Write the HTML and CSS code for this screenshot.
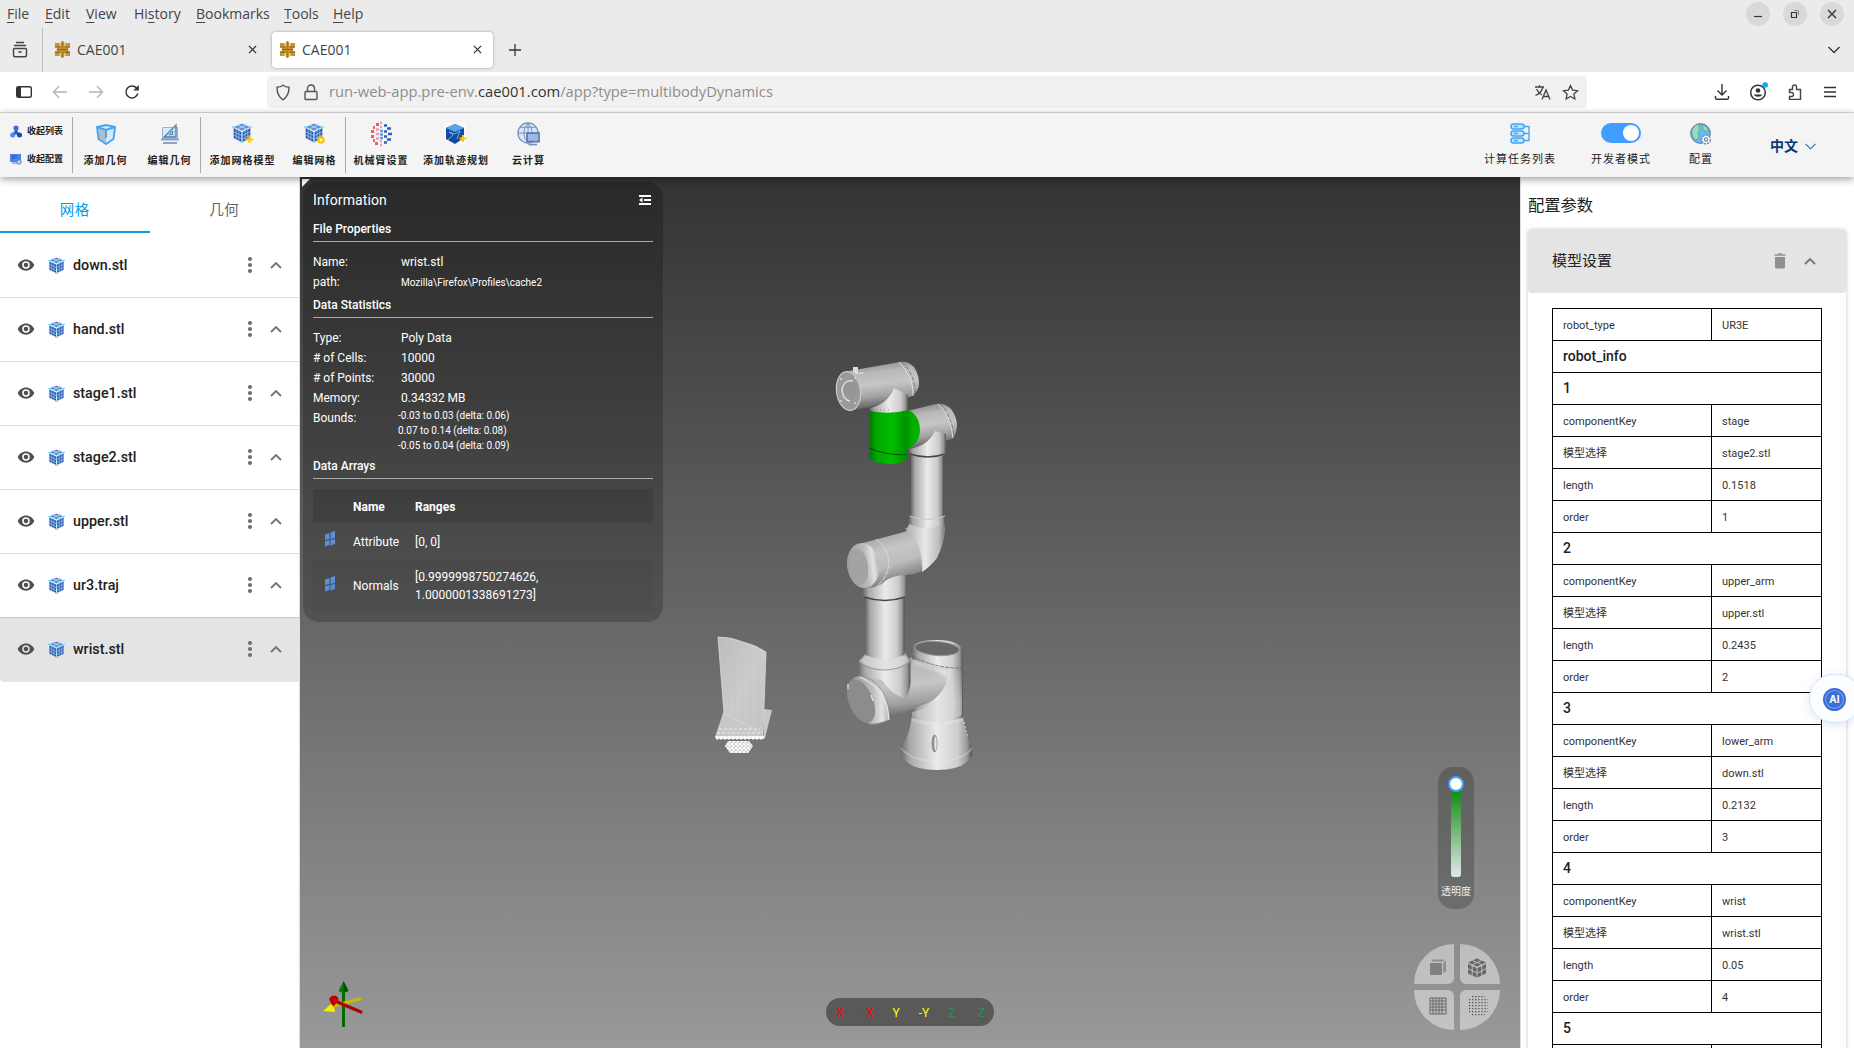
FILE: index.html
```html
<!DOCTYPE html>
<html lang="zh-CN">
<head>
<meta charset="utf-8">
<title>CAE001</title>
<link rel="stylesheet" href="styles.css">
</head>
<body>
<svg class="defs" width="0" height="0">
  <defs>
    <symbol id="cube" viewBox="0 0 18 18">
      <path d="M9 .5 16.500 3.500 9 7 1.500 3.500Z" fill="#5f93da"/>
      <path d="M1.500 4.500 8.500 8v9L1.500 13.500ZM16.500 4.500 9.500 8v9l7-3.500Z" fill="#2a5cae"/>
      <path d="M5.200 1.800 13 5.500M12.800 1.800 5 5.500" stroke="#b4d0f6" stroke-width=".9"/>
      <path d="M3.800 5.500v9M6.200 6.700v9M11.800 6.700v9M14.200 5.500v9M1.500 7.900 9 11.500l7.500-3.600M1.500 10.900 9 14.500l7.500-3.600" stroke="#a5c5f2" stroke-width=".7" fill="none"/>
      <path d="M0 3.700h3.500M14.500 3.700H18M9 8v4M7.500 17h3" stroke="#6cd0fb" stroke-width="1.300"/>
    </symbol>
    <symbol id="gear-logo" viewBox="0 0 16 18">
      <path d="M0 2h5v3h1V1.500L8 0l2 1.500V5h1V2h5v5h-2v4h2v5h-5v-3h-1v3.500L8 18l-2-1.500V13H5v3H0v-5h2V7H0Z" fill="#c9962e"/>
      <path d="M0 6.300h5.500M10.500 6.300H16M2 9h12M0 11.800h5.500M10.500 11.800H16" stroke="#8a631b" stroke-width="1.200"/>
      <path d="M8 0v18" stroke="#a87a22" stroke-width="1.400"/>
    </symbol>
    <symbol id="x" viewBox="0 0 10 10"><path d="M1 1l8 8M9 1L1 9" stroke="#333" stroke-width="1.400"/></symbol>
    <symbol id="eye" viewBox="0 0 24 24"><path fill="#505050" d="M12 9a3 3 0 0 0-3 3 3 3 0 0 0 3 3 3 3 0 0 0 3-3 3 3 0 0 0-3-3m0 8a5 5 0 0 1-5-5 5 5 0 0 1 5-5 5 5 0 0 1 5 5 5 5 0 0 1-5 5m0-12.500C7 4.500 2.730 7.610 1 12c1.730 4.390 6 7.500 11 7.500s9.270-3.110 11-7.500c-1.730-4.390-6-7.500-11-7.500Z"/></symbol>
    <symbol id="dots" viewBox="0 0 6 18"><g fill="#6f6f6f"><circle cx="3" cy="3" r="2.100"/><circle cx="3" cy="9" r="2.100"/><circle cx="3" cy="15" r="2.100"/></g></symbol>
    <symbol id="up" viewBox="0 0 12 8"><path d="M1 7l5-5 5 5" fill="none" stroke="#757575" stroke-width="1.900"/></symbol>
    <symbol id="array" viewBox="0 0 10 16"><path d="M0 3.500 4.500 2v6L0 9ZM5.500 1.500 10 0v7l-4.500 1ZM0 10.200 4.500 9v5L0 15.500ZM5.500 9 10 8v5l-4.500 1.500Z" fill="#5b8fdc"/></symbol>
  </defs>
</svg>

<header class="browser">
  <div class="menubar">
    <nav class="menus">
      <span class="m-file"><u>F</u>ile</span><span class="m-edit"><u>E</u>dit</span><span class="m-view"><u>V</u>iew</span><span class="m-hist">Hi<u>s</u>tory</span><span class="m-book"><u>B</u>ookmarks</span><span class="m-tool"><u>T</u>ools</span><span><u>H</u>elp</span>
    </nav>
    <div class="winbtns">
      <i><svg width="10" height="10"><path d="M1 7.500h8" stroke="#333" stroke-width="1.200"/></svg></i>
      <i><svg width="10" height="10"><path d="M1.500 3.500h5v5h-5Z" fill="none" stroke="#333" stroke-width="1.200"/><path d="M4 1.500h4.500V6" fill="none" stroke="#888"/></svg></i>
      <i><svg width="10" height="10"><use href="#x"/></svg></i>
    </div>
  </div>
  <div class="tabs">
    <div class="recent"><svg width="18" height="18"><path d="M5 1.500h8M3 4.500h12M3.500 7.500h11q1 0 1 1v5.500q0 1.800-1.800 1.800H4.300q-1.800 0-1.800-1.800V8.500q0-1 1-1ZM7.300 11h3.400" fill="none" stroke="#444" stroke-width="1.400"/></svg></div>
    <div class="tab"><svg width="17" height="17"><use href="#gear-logo"/></svg><span>CAE001</span><svg class="close" width="9" height="9"><use href="#x"/></svg></div>
    <div class="tab active"><svg width="17" height="17"><use href="#gear-logo"/></svg><span>CAE001</span><svg class="close" width="9" height="9"><use href="#x"/></svg></div>
    <svg class="plus" width="12" height="12"><path d="M6 0v12M0 6h12" stroke="#333" stroke-width="1.300"/></svg>
    <svg class="alltabs" width="12" height="8"><path d="M.5 1 6 6.500 11.500 1" fill="none" stroke="#333" stroke-width="1.300"/></svg>
  </div>
  <div class="navbar">
    <div class="navbtns">
      <svg width="16" height="14"><rect x=".7" y="1.700" width="14.600" height="10.600" rx="1.500" fill="none" stroke="#333" stroke-width="1.400"/><path d="M1 2h4v10H1Z" fill="#333"/></svg>
      <svg width="16" height="14"><path d="M15 7H1.500M7 1 1.500 7 7 13" fill="none" stroke="#b5b5b5" stroke-width="1.400"/></svg>
      <svg width="16" height="14"><path d="M1 7h13.500M9 1l5.500 6L9 13" fill="none" stroke="#b5b5b5" stroke-width="1.400"/></svg>
      <svg width="16" height="16"><path d="M13.800 9.500A6 6 0 1 1 12.500 4" fill="none" stroke="#333" stroke-width="1.500"/><path d="M14.800 1v5.500H9.300Z" fill="#333"/></svg>
    </div>
    <div class="urlbar">
      <svg class="shield" width="16" height="17"><path d="M8 1.200c2 1.500 4 2 6 2.100 0 5-1 9.500-6 12.500C3 12.800 2 8.300 2 3.300c2-.1 4-.6 6-2.100Z" fill="none" stroke="#555" stroke-width="1.400"/></svg>
      <svg class="lock" width="14" height="17"><path d="M2 7.500h10q1 0 1 1v6q0 1-1 1H2q-1 0-1-1v-6q0-1 1-1ZM3.500 7.500V4.200a3.500 3.200 0 0 1 7 0v3.300" fill="none" stroke="#555" stroke-width="1.400"/></svg>
      <span class="url">run-web-app.pre-env.<b>cae001.com</b>/app?type=multibodyDynamics</span>
      <svg class="translate" width="17" height="17"><path d="M1 3h9M5.500 1v2M9 3C8 7 5 10 1.500 11.500M2.500 5C4 8 6 10 8 11M8 15.500 12 6l4 9.500M9.500 12.500h5" fill="none" stroke="#444" stroke-width="1.300"/></svg>
      <svg width="17" height="17"><path d="m8.500 1.500 2.100 4.600 5 .6-3.700 3.400 1 4.900-4.400-2.500L4.100 15l1-4.900L1.400 6.700l5-.6Z" fill="none" stroke="#444" stroke-width="1.300"/></svg>
    </div>
    <div class="navright">
      <svg width="16" height="16"><path d="M8 0v10.500M3.500 6.500 8 11l4.500-4.500M1.500 12v2q0 1.300 1.300 1.300h10.400q1.300 0 1.300-1.300v-2" fill="none" stroke="#333" stroke-width="1.400"/></svg>
      <svg class="account" width="20" height="20"><circle cx="10" cy="10.500" r="7.300" fill="none" stroke="#333" stroke-width="1.500"/><circle cx="10" cy="8.500" r="2.300" fill="#333"/><path d="M5.500 12.500h9a5 4 0 0 1-9 0Z" fill="#333"/><circle cx="17.200" cy="3" r="2.800" fill="#00aeff"/></svg>
      <svg width="16" height="16"><path d="M2.500 5.500h3V3a2 2 0 0 1 4 0v2.500h4v10h-11v-3h2a2 2 0 0 0 0-4h-2Z" fill="none" stroke="#444" stroke-width="1.400"/></svg>
      <svg width="14" height="12"><path d="M1 1.500h12M1 6h12M1 10.500h12" stroke="#333" stroke-width="1.300"/></svg>
    </div>
  </div>
</header>

<section class="toolbar">
  <div class="collapse">
    <div><svg width="12" height="13"><path d="M6 4v4M6 7 3 10M6 7l3 3" stroke="#2c57c7" stroke-width="3"/><circle cx="6" cy="3" r="2.600" fill="#3c6be0"/><circle cx="2.700" cy="10" r="2.500" fill="#5a85ea"/><circle cx="9.500" cy="10" r="2.500" fill="#1e46b5"/></svg>收起列表</div>
    <div><svg width="12" height="12"><path d="M0 1h11v8H0Z" fill="#4a86e8"/><path d="M2 3h5M2 5h3" stroke="#1d4fae"/><path d="M2 10h5" stroke="#8aa6d6" stroke-width="1.500"/><circle cx="9" cy="9" r="2.200" fill="#c7d6f2" stroke="#5877b5"/></svg>收起配置</div>
  </div>
  <div class="tools t1">
    <div class="tool"><svg width="20" height="20" viewBox="0 0 20 22"><path d="M10 2 19 4l-1.500 12-7.500 5-7.500-5L1 4Z" fill="#d6eafc"/><path d="m2 5 8 2.500V20l-7-4.500Z" fill="#b5bcc4"/><path d="M10 2 19 4l-1.500 12-7.500 5-7.500-5L1 4ZM1 4l9 3 9-3M10 7v8" fill="none" stroke="#42a5f5" stroke-width="1.900"/></svg>添加几何</div>
    <div class="tool"><svg width="20" height="20" viewBox="0 0 20 22"><path d="M2.500 4.500h15v11h-15Z" fill="#dbe9f8" stroke="#9cb2cf"/><path d="M16 2v12H4Z" fill="#b9dcf5" stroke="#4e80b5" stroke-width="1.300"/><path d="M12.500 8v3.500h-3Z" fill="#f4f4f4" stroke="#4e80b5"/><path d="M1 16.500h18M3 20h14" stroke="#8fa1bf" stroke-width="2.200"/></svg>编辑几何</div>
  </div>
  <div class="tools t2">
    <div class="tool"><svg width="22" height="22" viewBox="0 0 22 22"><use href="#cube" width="20" height="20"/><path d="M17.500 13v7M14 16.500h7" stroke="#ffc800" stroke-width="2"/></svg>添加网格模型</div>
    <div class="tool"><svg width="22" height="22" viewBox="0 0 22 22"><use href="#cube" width="20" height="20"/><circle cx="17" cy="17" r="2.500" fill="#fff" stroke="#ffc800" stroke-width="2.500"/></svg>编辑网格</div>
  </div>
  <div class="tools t3">
    <div class="tool"><svg width="22" height="25" viewBox="0 0 22 25"><path d="M3 6h2M1 10h3M1 15h3M3 19h2M6 3h3M5 22h3" stroke="#ef5b68" stroke-width="2.800"/><path d="M10 1.500h2M10 5.500h2M6 8h3M6 12.500h3M6 17h3M10 19.500h2M10 23.500h2" stroke="#e9a3aa" stroke-width="2.300"/><path d="M10 9.500h3M10 13h3M10 16.500h3" stroke="#6d9be0" stroke-width="2.300"/><path d="M14 4h3M17 7h4M14 10h3M18 12.500h4M14 15h3M17 18h4M14 21h3" stroke="#2f62b3" stroke-width="2.700"/></svg>机械臂设置</div>
    <div class="tool"><svg width="22" height="22" viewBox="0 0 22 22"><path d="M0 0h21v21H0Z" fill="#fafafa"/><path d="m1 5 9-4 9 4v10l-9 6-9-5Z" fill="#174a9c"/><path d="m1 5 9-4 9 4-9 4Z" fill="#55a4ed"/><path d="m3 17 5-5-4-3 6 2 5-3-3 8" fill="none" stroke="#68bcd6"/><path d="M18 12v7M14.500 15.500h7" stroke="#ffc800" stroke-width="2"/></svg>添加轨迹规划</div>
    <div class="tool"><svg width="23" height="24" viewBox="0 0 24 25"><circle cx="11.500" cy="11.500" r="10.500" fill="#d5e8fa" stroke="#7390bd" stroke-width="1.300"/><path d="M1 11.500h21M3 5.500h17M11.500 1v21M11.500 1q-9 10.500 0 21M11.500 1q9 10.500 0 21" fill="none" stroke="#7390bd"/><path d="M10.500 11.500h12.500v9H10.500Z" fill="#9ab9e8" stroke="#6379a8" stroke-width="1.800"/><path d="M12 23.500h9" stroke="#7d8fb8" stroke-width="1.800"/></svg>云计算</div>
  </div>
  <div class="actions">
    <div class="action a1"><svg width="20" height="22" viewBox="0 0 20 22"><g fill="#c4e4fb" stroke="#42a5f5" stroke-width="1.500"><rect x="1" y="1" width="13" height="5" rx="2.500"/><rect x="1" y="8" width="13" height="5" rx="2.500"/><rect x="1" y="15" width="13" height="5" rx="2.500"/></g><path d="M4 3.500h4M4 10.500h4M4 17.500h4M14 3.500h5v14h-5M14 10.500h5" fill="none" stroke="#42a5f5" stroke-width="1.300"/></svg>计算任务列表</div>
    <div class="action a2"><span class="switch"></span>开发者模式</div>
    <div class="action a3"><svg width="22" height="22" viewBox="0 0 22 22"><circle cx="10.500" cy="10.500" r="9.800" fill="#62bbf5" stroke="#7280a8" stroke-width="1.200"/><path d="M2 7q4-7 7-5 2 4-1 7 2 5-1 8Q1 15 2 7ZM12 1.500q6 2 7 6-3 2-6-1Z" fill="#99dcb6" stroke="#5f9f96" stroke-width=".8"/><circle cx="16" cy="16.500" r="4.300" fill="#fff" stroke="#7280a8" stroke-width="1.300" stroke-dasharray="2.200 1"/><circle cx="16" cy="16.500" r="1.600" fill="none" stroke="#7280a8" stroke-width="1.200"/></svg>配置</div>
    <div class="lang">中文<svg width="11" height="7"><path d="m.5.8 5 5 5-5" fill="none" stroke="#36639c" stroke-width="1.100"/></svg></div>
  </div>
</section>

<main class="workspace">
  <aside class="left">
    <div class="ltabs"><span class="on">网格</span><span>几何</span></div>
    <div class="file"><svg class="eye"><use href="#eye"/></svg><svg class="cube"><use href="#cube"/></svg><b>down.stl</b><svg class="dots"><use href="#dots"/></svg><svg class="up"><use href="#up"/></svg></div>
    <div class="file"><svg class="eye"><use href="#eye"/></svg><svg class="cube"><use href="#cube"/></svg><b>hand.stl</b><svg class="dots"><use href="#dots"/></svg><svg class="up"><use href="#up"/></svg></div>
    <div class="file"><svg class="eye"><use href="#eye"/></svg><svg class="cube"><use href="#cube"/></svg><b>stage1.stl</b><svg class="dots"><use href="#dots"/></svg><svg class="up"><use href="#up"/></svg></div>
    <div class="file"><svg class="eye"><use href="#eye"/></svg><svg class="cube"><use href="#cube"/></svg><b>stage2.stl</b><svg class="dots"><use href="#dots"/></svg><svg class="up"><use href="#up"/></svg></div>
    <div class="file"><svg class="eye"><use href="#eye"/></svg><svg class="cube"><use href="#cube"/></svg><b>upper.stl</b><svg class="dots"><use href="#dots"/></svg><svg class="up"><use href="#up"/></svg></div>
    <div class="file"><svg class="eye"><use href="#eye"/></svg><svg class="cube"><use href="#cube"/></svg><b>ur3.traj</b><svg class="dots"><use href="#dots"/></svg><svg class="up"><use href="#up"/></svg></div>
    <div class="file selected"><svg class="eye"><use href="#eye"/></svg><svg class="cube"><use href="#cube"/></svg><b>wrist.stl</b><svg class="dots"><use href="#dots"/></svg><svg class="up"><use href="#up"/></svg></div>
  </aside>

  <section class="viewport">
    <svg class="scene" width="1220" height="871" viewBox="300 177 1220 871">
      <defs>
        <linearGradient id="tube"><stop offset="0" stop-color="#6a6a6a"/><stop offset=".12" stop-color="#a8a8a8"/><stop offset=".5" stop-color="#ebebeb"/><stop offset=".8" stop-color="#cdcdcd"/><stop offset=".93" stop-color="#999"/><stop offset="1" stop-color="#555"/></linearGradient>
        <linearGradient id="barrel" x1=".42" y1="0" x2=".58" y2="1"><stop offset="0" stop-color="#8c8c8c"/><stop offset=".2" stop-color="#b8b8b8"/><stop offset=".45" stop-color="#c6c6c6"/><stop offset=".7" stop-color="#a0a0a0"/><stop offset=".9" stop-color="#666"/><stop offset="1" stop-color="#333"/></linearGradient>
        <linearGradient id="green"><stop offset="0" stop-color="#007a00"/><stop offset=".15" stop-color="#00a800"/><stop offset=".45" stop-color="#00bd00"/><stop offset=".72" stop-color="#009200"/><stop offset=".85" stop-color="#00ae00"/><stop offset="1" stop-color="#00b400"/></linearGradient>
        <linearGradient id="blade" x1="0" y1="0" x2="1" y2="1"><stop offset="0" stop-color="#bdbdbd"/><stop offset=".5" stop-color="#cbcbcb"/><stop offset="1" stop-color="#c5c5c5"/></linearGradient>
        <linearGradient id="elbow" x1=".3" y1="0" x2=".75" y2="1"><stop offset="0" stop-color="#8a8a8a"/><stop offset=".4" stop-color="#c6c6c6"/><stop offset=".6" stop-color="#bdbdbd"/><stop offset=".85" stop-color="#777"/><stop offset="1" stop-color="#3a3a3a"/></linearGradient>
        <linearGradient id="bend"><stop offset="0" stop-color="#aaa"/><stop offset=".5" stop-color="#e8e8e8"/><stop offset=".85" stop-color="#bcbcbc"/><stop offset="1" stop-color="#777"/></linearGradient>
        <linearGradient id="capg"><stop offset="0" stop-color="#999"/><stop offset=".6" stop-color="#bbb"/><stop offset=".82" stop-color="#e2e2e2"/><stop offset="1" stop-color="#b5b5b5"/></linearGradient>
        <linearGradient id="fade" x1="0" y1="0" x2="0" y2="1"><stop offset="0" stop-color="#ddd" stop-opacity="0"/><stop offset=".6" stop-color="#ddd"/></linearGradient>
        <pattern id="mesh" width="4" height="4" patternUnits="userSpaceOnUse"><path d="M0 0 4 4M4 0 0 4" stroke="#fff" stroke-width="1.200"/></pattern>
        <filter id="soft"><feGaussianBlur stdDeviation="2"/></filter>
      </defs>

      <!-- turbine blade -->
      <path d="m724 710-9 27 50 1 7-28-8-1v26Z" fill="#c8c8c8"/>
      <path d="M718 637q13 0 25 5 13 3 23 10l-3 82-39-21Z" fill="url(#blade)" stroke="#d9d9d9" stroke-width=".8"/>
      <path d="M722 642q10 30 7 68M729 644q8 30 6 72M738 646q6 30 5 75M748 650q4 30 3 76M757 654q3 30 2 76" fill="none" stroke="#b8b8b8" stroke-width="1.500" stroke-dasharray="1 3" opacity=".5"/>
      <path d="M719 729h41M717 733h46" stroke="#eee" stroke-dasharray="3 2"/>
      <path d="M715 736h50l-1 3h-48Z" fill="#eee"/><path d="M716 738h48" stroke="#fff" stroke-width="3" stroke-dasharray="2 2"/>
      <path d="m728 741-3 5 5 7h18l5-7-4-5Z" fill="#c8c8c8"/><path d="m728 741-3 5 5 7h18l5-7-4-5Z" fill="url(#mesh)"/>

      <!-- base -->
      <path d="M912 716h51q1 16 9 31v9q-8 14-35 14t-36-14v-9q9-12 11-31Z" fill="url(#tube)"/>
      <path d="M912 650q2-9 25-9t26 10v67q-25 7-51 0Z" fill="url(#tube)"/>
      <path d="M912 717q25 9 51 0l1 4q-26 9-53 0Z" fill="#eee" opacity=".25"/>
      <path d="M901 748q10 13 36 13t35-13" fill="none" stroke="#eee" stroke-width="2" opacity=".3"/>
      <ellipse cx="934.500" cy="743.500" rx="3" ry="9" fill="#909090"/><ellipse cx="935.500" cy="743.500" rx="1.200" ry="7" fill="#e5e5e5"/>
      <path d="M964 722q1 8 4 14" fill="none" stroke="#eee" stroke-dasharray="2 2"/>
      <!-- shoulder -->
      <path d="M866 675 913 657Q935 650 948 665 950 690 930 702 900 715 872 724L853 709Z" fill="url(#barrel)"/>
      <path d="M912 712q25-5 36-25l14-20v48l-20 10-30-8Z" fill="url(#fade)" opacity=".45"/>
      <path d="M913 659q18 8 35 10l3 12q-16-14-38-18Z" fill="#e6e6e6" filter="url(#soft)"/>
      <path d="M912 649q1-9 25-9t26 12v17q-30 0-51-10Z" fill="url(#tube)"/>
      <ellipse cx="937" cy="648.500" rx="22.500" ry="7" fill="#676767" stroke="#999" stroke-width="1" transform="rotate(4 937 648.500)"/>
      <path d="M912 656q24 13 51 12" fill="none" stroke="#666" stroke-width=".8" stroke-dasharray="4 1"/>
      <path d="M868 651h36l6.500 10v22q-1 9-5 16-13-4-23-18-8-5-24-3v-17Z" fill="url(#tube)"/>
      <path d="M859 661q5-4 9-7h35q5 3 7 7-12 8-26 8t-25-8Z" fill="#ddd" opacity=".6"/>
      <path d="M859 662q10 8 25 8t26-8" fill="none" stroke="#999"/>
      <path d="M847 691q3-14 12-15 14 0 24 16 8 14 6 28-12 5-19 4-21-7-23-33Z" fill="url(#capg)" stroke="#888" stroke-width=".8"/>
      <ellipse cx="861" cy="701" rx="12" ry="23" fill="#8c8c8c" transform="rotate(-22 861 701)"/>
      <path d="M860 677q27 12 29 43M871 695l2 6M848 684v5" fill="none" stroke="#e5e5e5" stroke-width="1.200"/>
      <!-- upper tube -->
      <path d="M865.500 594h39v61q-20 8-39 0Z" fill="url(#tube)"/>
      <path d="M863 585q12-5 20-20l24 5v27q-20 7-44 0Z" fill="url(#tube)"/>
      <path d="M864 597q21 7 41 0" fill="none" stroke="#444" stroke-width="1.600"/>
      <!-- elbow -->
      <path d="M909 520v6q0 4-5 6l-41 11q-16 4-14 24 5 20 14 21 12 1 20-5 8-8 24-8 17-1 26-13 12-16 12-40Z" fill="url(#elbow)"/>
      <path d="M909 518h36v7q0 18-8 33-7 9-15 14 2-22-11-38-4-4-6-5 4-2 4-6Z" fill="url(#bend)"/>
      <path d="M876 539q13 10 13 25-2 14-12 22" fill="none" stroke="#ddd" stroke-dasharray="5 1"/>
      <path d="M908 531q13 12 14 35" fill="none" stroke="#ccc" stroke-width=".8" stroke-dasharray="3 2"/>
      <ellipse cx="863" cy="565.500" rx="16" ry="22.500" fill="url(#capg)" transform="rotate(-7 863 565.500)"/>
      <ellipse cx="858.500" cy="567" rx="9.500" ry="18" fill="#a3a3a3" transform="rotate(-7 858.500 567)"/>
      <!-- forearm -->
      <path d="M911 453h32.500v64q-16 6-32.500 0Z" fill="url(#tube)"/>
      <path d="M909 516q18 7 36 0v8q-18 8-36 0Z" fill="url(#tube)"/><path d="M910 516q18 7 35 0" fill="none" stroke="#ccc"/>
      <!-- second wrist -->
      <path d="m907 411 29-7q9-1 15 5 6 8 6 17-1 10-5 13l-15 4-30 6Z" fill="url(#barrel)"/>
      <path d="M909 449q19-3 26-18l11 3v21q-18 6-36 0Z" fill="url(#tube)"/>
      <path d="M910 454q18 6 35 0" fill="none" stroke="#444" stroke-width="1.600"/>
      <path d="M938 404q13 11 15 34" fill="none" stroke="#ddd"/><path d="M940 404q12 12 14 33" fill="none" stroke="#777" stroke-dasharray="4 2"/>
      <!-- highlighted link -->
      <path d="M869.500 409h38q8 4 11 12 3 9 0 17-3 8-11 10v9q-3 7-16 7-19 0-22-7Z" fill="url(#green)"/>
      <path d="M869 448q15 7 38 7" fill="none" stroke="#004c00" stroke-width="1"/>
      <!-- tool flange -->
      <path d="m849 371 51-9q8-1 14 5 5 8 5 16t-7 13l-13 5-44 9Z" fill="url(#barrel)"/>
      <path d="M870 408q18-4 24-20l14 7v15q-18 5-38 1Z" fill="url(#tube)"/>
      <path d="M899 362q15 15 14 34" fill="none" stroke="#ddd"/><path d="M902 362q14 14 13 33" fill="none" stroke="#777" stroke-dasharray="4 2"/>
      <path d="M876 410h16" stroke="#888" stroke-dasharray="1 3"/>
      <path d="M853 367h5v6l5-1v2h-7l-3-2Z" fill="#ddd"/>
      <ellipse cx="848.500" cy="391" rx="12" ry="19.500" fill="#9a9a9a" stroke="#ccc" stroke-width="1.200" transform="rotate(-7 848.500 391)"/>
      <ellipse cx="849.500" cy="390.500" rx="7.500" ry="10.500" fill="#969696"/>
      <path d="M853 381q-9-2-11 9 1 10 8 11" fill="none" stroke="#ddd" stroke-width="1.600"/>
      <circle cx="841" cy="379" r="1.100" fill="#d5d5d5"/><circle cx="855" cy="378" r="1.100" fill="#d5d5d5"/><circle cx="841" cy="401" r="1.100" fill="#d5d5d5"/><circle cx="855" cy="403" r="1.100" fill="#d5d5d5"/>

      <!-- orientation axes -->
      <path d="M343.500 1027v-36" stroke="#006c00" stroke-width="3"/><path d="m343.500 981-5 10q5 3 10 0Z" fill="#008000"/><path d="m343.500 981 5 10-5 1Z" fill="#005000"/>
      <path d="m333 1006 27-7" stroke="#c0c000" stroke-width="3" stroke-linecap="round"/>
      <path d="m335 1001 26 11" stroke="#b00000" stroke-width="3.200" stroke-linecap="round"/>
      <path d="m329 999 2.500-3 4-.5 3 2.500-.5 3-5 6Z" fill="#c00000"/>
      <path d="m323 1011 8-7q4 3 4 8Z" fill="#f0f000"/>
    </svg>

    <i class="corner"></i>
    <section class="info">
      <div class="ihead">Information<svg width="12" height="10"><path d="M0 1h12M5 5h7M0 9h12" stroke="#fff" stroke-width="1.800"/><path d="m0 5 3.500-2.500v5Z" fill="#fff"/></svg></div>
      <h3>File Properties</h3>
      <dl><dt>Name:</dt><dd>wrist.stl</dd><dt>path:</dt><dd class="small">Mozilla\Firefox\Profiles\cache2</dd></dl>
      <h3>Data Statistics</h3>
      <dl class="stats"><dt>Type:</dt><dd>Poly Data</dd><dt># of Cells:</dt><dd>10000</dd><dt># of Points:</dt><dd>30000</dd><dt>Memory:</dt><dd>0.34332 MB</dd><dt>Bounds:</dt><dd class="bounds">-0.03 to 0.03 (delta: 0.06)<br>0.07 to 0.14 (delta: 0.08)<br>-0.05 to 0.04 (delta: 0.09)</dd></dl>
      <h3>Data Arrays</h3>
      <div class="arrays">
        <div class="arow ahead"><span></span><b>Name</b><b>Ranges</b></div>
        <div class="arow r1"><svg width="10" height="16"><use href="#array"/></svg><span>Attribute</span><span>[0, 0]</span></div>
        <div class="arow r2"><svg width="10" height="16"><use href="#array"/></svg><span>Normals</span><span>[0.9999998750274626,<br>1.0000001338691273]</span></div>
      </div>
    </section>

    <div class="axes"><span class="r">X</span><span class="r">-X</span><span class="y">Y</span><span class="y">-Y</span><span class="g">Z</span><span class="g">-Z</span></div>
    <div class="opacity"><div class="track"><i></i></div>透明度</div>
    <div class="quad">
      <div class="q1"><svg width="18" height="18"><path d="M1 6q0-1 1-1h10q1 0 1 1v10q0 1-1 1H2q-1 0-1-1Z" fill="#808080"/><path d="M2.500 3.500 4 1.500h12l-2 2ZM14.300 5 17 2.500V13l-2.700 2.500Z" fill="#8c8c8c"/></svg></div>
      <div class="q2"><svg width="20" height="20"><path d="m10 .5 9 4-9 4-9-4ZM1 6l8.500 4v9.500L1 15.500ZM19 6l-8.500 4v9.500l8.500-4Z" fill="#666"/><path d="M5.500 2.500 14.500 6.500M14.500 2.500 5.500 6.500M5.200 7v12M14.800 7v12M1 10.700l9 4.300 9-4.300" stroke="#c0c0c0" fill="none"/></svg></div>
      <div class="q3"><svg width="18" height="18"><path d="M1 1h16v16H1ZM1 4h16M1 7h16M1 10h16M1 13h16M4 1v16M7 1v16M10 1v16M13 1v16" fill="none" stroke="#666" stroke-width="1"/></svg></div>
      <div class="q4"><svg width="20" height="20"><g stroke="#4a4a4a" stroke-width="1.300" stroke-dasharray="1.200 1.900"><path d="M4 .7h13M1 3.700h19M1 6.700h19M1 9.700h19M1 12.700h19M1 15.700h19M4 18.700h13"/></g></svg></div>
    </div>
  </section>

  <aside class="right">
    <h2>配置参数</h2>
    <div class="card">
      <div class="chead">模型设置<svg class="trash" width="12" height="16"><path d="M1 4h10v10q0 1.500-1.500 1.500h-7Q1 15.500 1 14Z" fill="#8f8f8f"/><path d="M.5 2h11" stroke="#8f8f8f" stroke-width="1.500"/><path d="M4 .8h4" stroke="#8f8f8f"/></svg><svg class="up" width="12" height="8"><use href="#up"/></svg></div>
      <div class="params">
        <div class="p"><span>robot_type</span><span>UR3E</span></div>
        <div class="h">robot_info</div>
        <div class="h">1</div>
        <div class="p"><span>componentKey</span><span>stage</span></div>
        <div class="p"><span>模型选择</span><span>stage2.stl</span></div>
        <div class="p"><span>length</span><span>0.1518</span></div>
        <div class="p"><span>order</span><span>1</span></div>
        <div class="h">2</div>
        <div class="p"><span>componentKey</span><span>upper_arm</span></div>
        <div class="p"><span>模型选择</span><span>upper.stl</span></div>
        <div class="p"><span>length</span><span>0.2435</span></div>
        <div class="p"><span>order</span><span>2</span></div>
        <div class="h">3</div>
        <div class="p"><span>componentKey</span><span>lower_arm</span></div>
        <div class="p"><span>模型选择</span><span>down.stl</span></div>
        <div class="p"><span>length</span><span>0.2132</span></div>
        <div class="p"><span>order</span><span>3</span></div>
        <div class="h">4</div>
        <div class="p"><span>componentKey</span><span>wrist</span></div>
        <div class="p"><span>模型选择</span><span>wrist.stl</span></div>
        <div class="p"><span>length</span><span>0.05</span></div>
        <div class="p"><span>order</span><span>4</span></div>
        <div class="h">5</div>
        <div class="p"><span></span><span></span></div>
      </div>
    </div>
    <div class="ai"><span>AI</span></div>
  </aside>
</main>
</body>
</html>
```
FILE: styles.css
```css
* { box-sizing: border-box; }
body { margin: 0; width: 1854px; height: 1048px; overflow: hidden; display: flex; flex-direction: column; background: #fff; font-family: Roboto, "Noto Sans CJK SC", sans-serif; color: #212121; }
svg { display: block; flex: none; }
.defs { position: absolute; }

/* browser chrome */
.browser { height: 113px; flex: none; background: #ebebeb; border-bottom: 1px solid #e0e0e2; font-family: "Open Sans", "Noto Sans", sans-serif; font-size: 14px; color: #444; }
.menubar { height: 28px; display: flex; align-items: center; justify-content: space-between; padding: 0 10px 0 7px; }
.menus { display: flex; margin-top: -2px; }
.menus u { text-underline-offset: 3px; }
.m-file { width: 38px; } .m-edit { width: 41px; } .m-view { width: 48px; } .m-hist { width: 62px; } .m-book { width: 88px; } .m-tool { width: 49px; }
.winbtns { display: flex; gap: 13px; }
.winbtns i { width: 24px; height: 24px; border-radius: 50%; background: #d9d9d9; display: grid; place-items: center; }
.tabs { height: 44px; display: flex; align-items: center; padding-right: 14px; }
.recent { width: 43px; height: 44px; border-right: 1px solid #bcbcbc; display: flex; align-items: center; padding-left: 11px; }
.tab { width: 221px; height: 36px; margin-left: 4px; display: flex; align-items: center; padding: 0 11px 2px 7px; border-radius: 4px; }
.tab span { margin-left: 6px; flex: 1; }
.tab.active { background: #fff; box-shadow: 0 0 3px rgba(0,0,0,.35); }
.plus { margin-left: 16px; }
.alltabs { margin-left: auto; }
.navbar { height: 40px; background: #fff; display: flex; align-items: center; }
.navbtns { width: 267px; display: flex; gap: 20px; padding-left: 16px; align-items: center; }
.urlbar { width: 1320px; height: 32px; border-radius: 4px; background: #f1f1f1; display: flex; align-items: center; padding: 0 8px; color: #8d8d8d; }
.lock { margin-left: 13px; }
.url { margin: -2px 0 0 11px; flex: 1; font-size: 14.740px; }
.url b { font-weight: 400; color: #333; }
.translate { margin-right: 11px; }
.navright { margin-left: 127px; display: flex; align-items: center; gap: 20px; }
.account { margin: 0 -1px 0 -2px; }

/* application toolbar */
.toolbar { height: 64px; flex: none; background: #f4f4f4; display: flex; padding: 4px 0; position: relative; z-index: 2; box-shadow: 0 2px 8px rgba(0,0,0,.4); font-family: "Noto Sans CJK SC", sans-serif; color: #222; }
.collapse { width: 73px; border-right: 1px solid #aaa; padding: 5px 0 0 10px; display: flex; flex-direction: column; gap: 10px; font-size: 9px; font-weight: 700; line-height: 18px; }
.collapse div { display: flex; align-items: center; gap: 5px; white-space: nowrap; }
.tools { display: flex; border-right: 1px solid #aaa; }
.tools.t3 { border: 0; }
.tool { flex: none; display: flex; flex-direction: column; align-items: center; font-size: 10px; font-weight: 700; letter-spacing: 1px; line-height: 16px; padding-top: 4px; white-space: nowrap; }
.tool svg { height: 26px; margin: 0 0 5px; }
.action svg { height: 26px; margin: 0 0 3px; }
.t1 { width: 128px; } .t1 .tool { width: 65px; }
.t1 .tool + .tool { width: 63px; }
.t1 .tool svg { height: 22px; margin: 2px 0 7px; }
.t2 { width: 145px; padding-left: 6px; } .t2 .tool { width: 71px; }
.t2 .tool + .tool { width: 73px; }
.t3 .tool { width: 70px; } .t3 .tool + .tool { width: 80px; } .t3 .tool:last-child { width: 65px; }
.actions { margin-left: auto; display: flex; }
.action { display: flex; flex-direction: column; align-items: center; font-size: 11px; letter-spacing: 1px; line-height: 16px; padding-top: 4px; white-space: nowrap; }
.a1 { width: 74px; margin-right: 33px; } .a2 { width: 62px; margin-right: 32px; } .a3 { width: 34px; }
.switch { width: 40px; height: 20px; border-radius: 10px; background: #409eff; margin: 2px 0 7px; padding: 2px; display: flex; justify-content: flex-end; }
.switch::after { content: ""; width: 16px; height: 16px; border-radius: 50%; background: #fff; }
.lang { width: 136px; padding: 0 0 1px 52px; display: flex; align-items: center; gap: 13px; font-size: 14px; font-weight: 700; color: #0a3875; }
.lang svg { margin-left: -6px; margin-top: 3px; }

.workspace { height: 871px; display: flex; }

/* file list */
.left { width: 300px; background: #fff; border-right: 1px solid #ddd; }
.ltabs { height: 56px; display: flex; margin-bottom: 1px; }
.ltabs span { width: 150px; display: grid; place-items: center; padding-top: 9px; font-size: 14.500px; letter-spacing: .5px; color: #666; border-bottom: 2px solid transparent; }
.ltabs .on { color: #0b9be5; border-color: #0b9be5; }
.file { width: 300px; height: 64px; border-bottom: 1px solid #dedede; display: flex; align-items: center; padding: 0 18px 1px 17px; }
.file:nth-child(7) { border-color: #c8c8c8; }
.file.selected { background: #e4e4e4; border: 0; border-radius: 0 0 4px 4px; padding-bottom: 2px; }
.file b { font-size: 14.300px; font-weight: 500; margin-left: 8px; flex: 1; }
.eye { width: 18px; height: 18px; }
.cube { width: 17px; height: 17px; margin-left: 13px; }
.dots { width: 6px; height: 18px; margin-right: 17px; }
.up { width: 12px; height: 8px; }

/* 3D viewport */
.viewport { position: relative; width: 1220px; flex: none; background: linear-gradient(#333, #999); overflow: hidden; }
.scene { position: absolute; inset: 0; }
.corner { position: absolute; left: 2px; top: 2px; border-top: 8px solid #fff; border-right: 8px solid transparent; }
.info { position: absolute; left: 3px; top: 5px; width: 360px; height: 440px; padding: 0 10px; border-radius: 16px; background: rgba(0,0,0,.2); color: #fff; font-size: 12px; }
.ihead { height: 36px; display: flex; align-items: center; justify-content: space-between; padding-right: 2px; font-size: 14px; letter-spacing: .1px; }
.info h3 { margin: 0; height: 24px; line-height: 22px; font-size: 12px; font-weight: 500; border-bottom: 1px solid #aaa; }
.info dl { margin: 0; padding-top: 10px; display: grid; grid-template-columns: 88px 1fr; line-height: 20px; }
.info dl + h3 { margin-top: 2px; }
.info .stats + h3 { margin-top: -2px; }
.info dd { margin: 0; }
.info dd.small { font-size: 10px; padding-top: 1px; margin-bottom: -1px; }
.info dd.bounds { font-size: 10px; line-height: 15px; margin: 0 0 0 -3px; height: 49px; }
.arrays { margin-top: 10px; }
.arow { display: grid; grid-template-columns: 40px 62px 1fr; align-items: center; line-height: 18px; }
.arow svg { margin: -5px 0 0 12px; }
.arow b { font-weight: 700; padding-top: 1px; }
.ahead { height: 34px; background: rgba(0,0,0,.1); }
.r1 { height: 37px; }
.r2 { height: 52px; background: rgba(0,0,0,.03); }
.axes { position: absolute; left: 526px; top: 821px; width: 168px; height: 28px; border-radius: 14px; background: #595959; display: grid; grid-template-columns: repeat(6, 28px); place-items: center; align-content: center; padding-top: 1px; font-size: 12px; }
.r { color: #f00; } .y { color: #ff0; } .g { color: #2e8b57; }
.opacity { position: absolute; left: 1138px; top: 590px; width: 36px; height: 142px; border-radius: 15px; background: rgba(0,0,0,.2); padding-top: 17px; display: flex; flex-direction: column; align-items: center; font-size: 10px; line-height: 16px; color: #eee; white-space: nowrap; }
.track { width: 10px; height: 93px; margin-bottom: 7px; border-radius: 3px; background: linear-gradient(#008500, #e4e7ed); }
.track i { display: block; width: 16px; height: 16px; margin: -8px 0 0 -3px; border: 2px solid #409eff; border-radius: 50%; background: #fff; }
.quad { position: absolute; left: 1114px; top: 767px; display: grid; grid-template-columns: 40px 40px; grid-auto-rows: 40px; gap: 6px; }
.quad div { background: rgba(255,255,255,.43); display: grid; place-items: center; }
.quad .q1 { border-radius: 40px 0 6px 0; padding: 5px 0 0 7px; }
.quad .q2 { border-radius: 0 40px 0 6px; padding: 7px 7px 0 0; }
.quad .q3 { border-radius: 0 6px 0 40px; padding: 0 0 9px 7px; }
.quad .q4 { border-radius: 6px 0 40px 0; padding: 0 5px 8px 0; }

/* parameter panel */
.right { position: relative; width: 334px; flex: none; border-left: 1px solid #ddd; background: #fff; padding: 0 8px 0 7px; }
.right h2 { margin: 0; height: 52px; padding-top: 6px; line-height: 46px; font-size: 16.300px; font-weight: 400; }
.card { height: 830px; border-radius: 4px; background: #fff; box-shadow: 0 1px 4px rgba(0,0,0,.25); }
.chead { height: 64px; border-radius: 4px; background: #e4e4e4; display: flex; align-items: center; padding: 0 30px 3px 24px; font-size: 15px; }
.chead svg { margin-top: 2px; }
.trash { margin-left: auto; margin-right: 18px; }
.params { margin: 15px 24px 0; width: 270px; border: solid #000; border-width: 1px 1px 0; }
.params > div { height: 32px; border-bottom: 1px solid #000; line-height: 33px; }
.p { display: grid; grid-template-columns: 158px 1fr; font-size: 11px; color: #333; }
.p span { padding-left: 10px; height: 31px; }
.p span + span { border-left: 1px solid #000; }
.params .h { padding-left: 10px; font-size: 14px; font-weight: 500; line-height: 30px; }
.ai { position: absolute; right: -8px; top: 497px; width: 53px; height: 49px; border: 1px solid #d8e4fc; border-radius: 25px; background: #fcfdff; box-shadow: 0 2px 10px rgba(80,110,180,.18); padding: 13px 0 0 13px; }
.ai span { width: 23px; height: 23px; border-radius: 50%; background: #3b6fd8; border: 2px solid #3b6fd8; box-shadow: inset 0 0 0 1px #83aaf2; color: #fff; font: 700 10px/19px Inter, sans-serif; text-align: center; display: block; }
```
